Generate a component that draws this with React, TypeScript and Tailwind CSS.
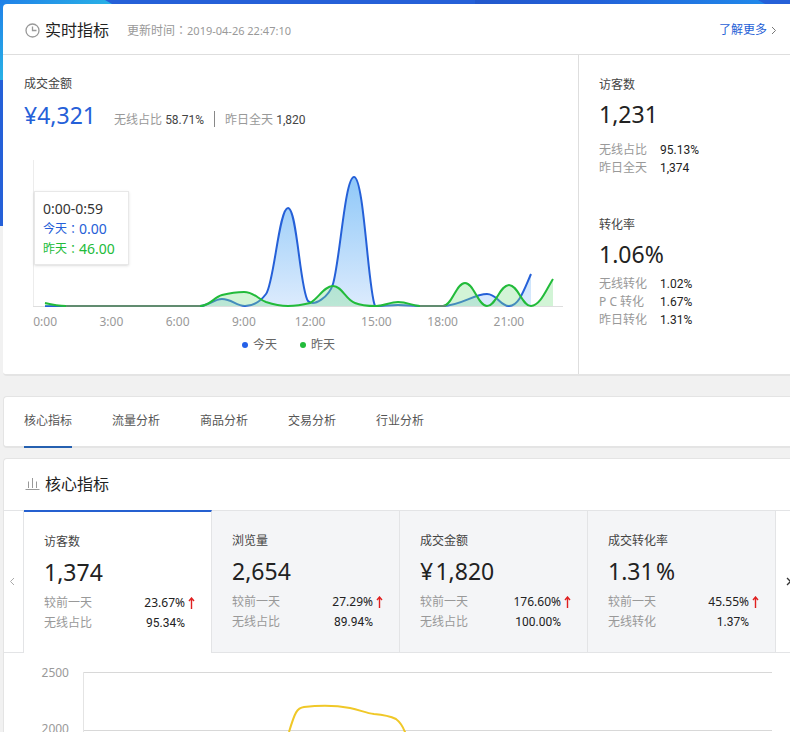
import React from "react";

const todayLine =
  "M45 306H200C208 306 214 299 222 299C232 299 236 306 245 306C254 306 260 302 266 294C274 284 279 208 288 208C297 208 300 290 308 301C314 307 329 297 333 284C340 260 345 177 354 177C364 177 368 290 375 306C382 306 390 305 398 305C408 305 412 306 420 306H443C460 306 474 294 487 294C497 294 500 306 509 306C519 306 524 290 531 274";
const yesterdayLine =
  "M45 303C53 305 58 306 66 306H200C210 306 214 297 222 295C230 293 237 292 244 292C254 292 258 299 266 302C275 305 280 306 288 306C296 306 302 305 310 303C318 299 324 286 333 286C342 286 346 300 355 303C362 306 368 306 376 306C384 306 390 302 398 302C408 302 412 306 420 306H443C452 306 456 283 465 283C474 283 478 306 487 306C496 306 500 285 509 285C518 285 522 306 531 306C540 306 546 290 553 279";

const hours = ["0:00", "3:00", "6:00", "9:00", "12:00", "15:00", "18:00", "21:00"];
const tabs = ["核心指标", "流量分析", "商品分析", "交易分析", "行业分析"];

type Row = [string, string];

/* Full-width colon, centred in its cell */
function Colon() {
  return <span className="font-['Noto_Sans_CJK_TC',sans-serif] text-xs">：</span>;
}

function SideMetric({ title, value, rows, roomy }: { title: string; value: string; rows: Row[]; roomy?: boolean }) {
  return (
    <section>
      <h3 className="text-xs leading-5 text-[#444]">{title}</h3>
      <p className="mt-[2px] text-[23px] leading-[34px] text-[#222]">{value}</p>
      <dl className={roomy ? "mt-[10px] text-xs leading-[18px]" : "mt-1 text-xs leading-[18px]"}>
        {rows.map(([k, v]) => (
          <div key={k} className="flex">
            <dt className="w-[61px] text-[#999]">{k}</dt>
            <dd className="font-[Roboto,sans-serif] text-[#222]">{v}</dd>
          </div>
        ))}
      </dl>
    </section>
  );
}

function UpArrow() {
  return (
    <svg className="h-3 w-[7px]" viewBox="0 0 7 12" fill="none" stroke="#e02020">
      <path d="M3.500 12V1.500M1 4L3.500 1L6 4" strokeWidth="1.400" />
    </svg>
  );
}

type CardData = { title: string; value: string; change: string; label: string; share: string };

const cards: CardData[] = [
  { title: "访客数", value: "1,374", change: "23.67%", label: "无线占比", share: "95.34%" },
  { title: "浏览量", value: "2,654", change: "27.29%", label: "无线占比", share: "89.94%" },
  { title: "成交金额", value: "¥\u200a1,820", change: "176.60%", label: "无线占比", share: "100.00%" },
  { title: "成交转化率", value: "1.31\u200a%", change: "45.55%", label: "无线转化", share: "1.37%" },
];

function MetricCard({ card, active }: { card: CardData; active: boolean }) {
  return (
    <button
      type="button"
      className={
        active
          ? "flex w-[188px] shrink-0 flex-col justify-start border-t-2 border-r border-t-[#2560d0] border-r-[#e3e4e6] bg-white pt-5 pr-[14px] pl-5 text-left"
          : "flex w-[188px] shrink-0 flex-col justify-start border-t border-r border-b border-[#e3e4e6] bg-[#f4f5f7] pt-5 pr-[14px] pl-5 text-left"
      }
    >
      <span className="block text-xs leading-5 text-[#444]">{card.title}</span>
      <span className="mt-[2px] block text-[23px] leading-9 text-[#222]">{card.value}</span>
      <span className="mt-[3px] flex w-full text-xs leading-5">
        <span className="flex-1 text-[#999]">较前一天</span>
        <span className="text-[#222]">{card.change}</span>
        <span className="flex w-3 items-center justify-center">
          <UpArrow />
        </span>
      </span>
      <span className="flex w-full pr-3 text-xs leading-5">
        <span className="flex-1 text-[#999]">{card.label}</span>
        <span className="font-[Roboto,sans-serif] text-[#222]">{card.share}</span>
      </span>
    </button>
  );
}

export default function App() {
  return (
    <div className="h-screen overflow-hidden bg-[#f1f1f1] font-['Noto_Sans','Noto_Sans_CJK_SC',sans-serif]">
      <div className="relative isolate pt-1 pl-[3px]">
        <div className="absolute inset-x-0 top-0 -z-10 h-[226px] overflow-hidden bg-[#2560d8]">
          <svg className="h-full w-full" viewBox="0 0 790 226" preserveAspectRatio="none">
            <defs>
              <linearGradient id="sky" x1="0" y1="0" x2="1" y2="1">
                <stop offset="0" stopColor="#2080e8" />
                <stop offset="0.5" stopColor="#28b0e6" />
              </linearGradient>
              <linearGradient id="band" x1="0" x2="1">
                <stop offset="0" stopColor="#2258cc" />
                <stop offset="0.4" stopColor="#2260d8" />
                <stop offset="1" stopColor="#2088ea" />
              </linearGradient>
            </defs>
            <path d="M0 0H105L112 4L3 80H0Z" fill="url(#sky)" />
            <path d="M475 0H758L765 4H475Z" fill="url(#band)" />
          </svg>
        </div>

        <section className="rounded-l border-b-2 border-[#e4e4e4] bg-white">
          <header className="flex h-[51px] items-center border-b border-[#dedede] pt-[2px] pr-[13px] pl-[22px]">
            <svg className="h-[15px] w-[15px]" viewBox="0 0 15 15" fill="none" stroke="#999" strokeWidth="1.300">
              <circle cx="7.500" cy="7.500" r="6.500" />
              <path d="M7.500 3.500V7.500H11.500" />
            </svg>
            <h2 className="ml-[5px] text-base text-[#222]">实时指标</h2>
            <p className="ml-[18px] text-xs text-[#999]">
              更新时间<Colon /><span className="text-[11px]">2019-04-26 22:47:10</span>
            </p>
            <a href="#more" className="ml-auto flex items-center gap-1 text-xs text-[#1f5fd6]">
              了解更多
              <svg className="h-[9px] w-[6px]" viewBox="0 0 6 9" fill="none" stroke="#777">
                <path d="M1 1L4.500 4.500L1 8" />
              </svg>
            </a>
          </header>

          <div className="flex">
            <div className="relative w-[576px] shrink-0 border-r border-[#dedede] pt-[19px]">
              <h3 className="pl-[21px] text-xs leading-5 text-[#444]">成交金额</h3>
              <div className="mt-1 flex h-[34px] items-center pl-[21px] text-xs">
                <strong className="w-[90px] text-[23px] leading-[34px] font-normal text-[#2560d8]">¥4,321</strong>
                <span className="pt-[10px] text-[#999]">
                  无线占比 <span className="font-[Roboto,sans-serif] text-[#444]">58.71%</span>
                </span>
                <span className="mt-2 ml-[10px] h-4 border-l border-[#888]" />
                <span className="ml-[10px] pt-[10px] text-[#999]">
                  昨日全天 <span className="font-[Roboto,sans-serif] text-[#444]">1,820</span>
                </span>
              </div>

              <svg className="mt-7 block h-[150px] w-full" viewBox="3 160 575 150" preserveAspectRatio="none">
                <defs>
                  <linearGradient id="blueFill" gradientUnits="userSpaceOnUse" x1="0" y1="177" x2="0" y2="306">
                    <stop offset="0" stopColor="#8fc8f8" />
                    <stop offset="1" stopColor="#dcebfd" />
                  </linearGradient>
                </defs>
                <path d="M33.500 160V306" stroke="#ececec" />
                <path d="M33 306.500H563" stroke="#dedede" />
                <path d={todayLine + "V306H45Z"} fill="url(#blueFill)" />
                <path d={todayLine} fill="none" stroke="#2560d8" strokeWidth="2" />
                <path d={yesterdayLine + "V306H45Z"} fill="#7fe08a" fillOpacity="0.35" />
                <path d={yesterdayLine} fill="none" stroke="#22bb3a" strokeWidth="2" />
                <path d="M66 306H200M420 306H446" stroke="#777e82" strokeWidth="1.500" />
              </svg>

              <div className="ml-[9px] grid w-[530px] grid-cols-8 pt-[2px] text-center text-xs leading-5 text-[#999]">
                {hours.map((h) => (
                  <span key={h}>{h}</span>
                ))}
              </div>
              <div className="flex items-center justify-center gap-[23px] pt-[3px] pr-1 pb-[19px] text-xs leading-5 text-[#666]">
                <span className="flex items-center gap-[5px]">
                  <i className="h-[6px] w-[6px] rounded-full bg-[#2560e8]" />
                  今天
                </span>
                <span className="flex items-center gap-[5px]">
                  <i className="h-[6px] w-[6px] rounded-full bg-[#22bb3a]" />
                  昨天
                </span>
              </div>

              <div className="absolute top-[136px] left-[31px] w-[95px] border border-[#e8e8e8] bg-white pt-[7px] pb-[5px] pl-2 text-sm leading-5 shadow-sm">
                <p className="text-[#333]">0:00-0:59</p>
                <p className="flex h-5 items-center text-[#2560d8]"><span className="text-xs">今天</span><Colon />0.00</p>
                <p className="flex h-5 items-center text-[#22bb3a]"><span className="text-xs">昨天</span><Colon />46.00</p>
              </div>
            </div>

            <div className="flex flex-col gap-[38px] pt-[20px] pl-5">
              <SideMetric roomy title="访客数" value="1,231" rows={[["无线占比", "95.13%"], ["昨日全天", "1,374"]]} />
              <SideMetric title="转化率" value="1.06%" rows={[["无线转化", "1.02%"], ["P C 转化", "1.67%"], ["昨日转化", "1.31%"]]} />
            </div>
          </div>
        </section>

        <nav className="mt-5 flex h-[52px] gap-10 rounded-l border border-r-0 border-b-2 border-[#e4e4e4] bg-white pl-5 text-xs text-[#555]">
          {tabs.map((t, i) => (
            <a key={t} href={"#" + t} className={i === 0 ? "-mb-[2px] border-b-2 border-[#2560b0] pt-4" : "pt-4"}>
              {t}
            </a>
          ))}
        </nav>

        <section className="mt-[10px] rounded-l border border-r-0 border-[#e4e4e4] bg-white">
          <header className="flex h-[51px] items-center gap-[5px] pb-[2px] pl-[21px]">
            <svg className="h-[15px] w-[15px]" viewBox="0 0 15 15" fill="none" stroke="#999">
              <path d="M.5 13.500H14.500M3.500 5.500V12M7.500 2V12M11.500 5.500V12" />
            </svg>
            <h2 className="text-base text-[#222]">核心指标</h2>
          </header>

          <div className="flex h-[143px] overflow-hidden">
            <button type="button" aria-label="上一页" className="flex w-5 shrink-0 items-center justify-center border border-l-0 border-[#e3e4e6] pr-1">
              <svg className="h-[9px] w-[6px]" viewBox="0 0 6 9" fill="none" stroke="#aaa">
                <path d="M5 1L1.500 4.500L5 8" />
              </svg>
            </button>
            {cards.map((c, i) => (
              <MetricCard key={c.title} card={c} active={i === 0} />
            ))}
            <button type="button" aria-label="下一页" className="flex flex-1 items-center justify-start border-t border-b border-[#e3e4e6] pl-[10px]">
              <svg className="h-[9px] w-[6px] shrink-0" viewBox="0 0 6 9" fill="none" stroke="#333" strokeWidth="1.300">
                <path d="M1 1L4.500 4.500L1 8" />
              </svg>
            </button>
          </div>

          <div className="flex pt-[10px] pr-[18px]">
            <div className="w-[79px] shrink-0 pr-[14px] text-right text-xs text-[#999]">
              <p className="h-[56px] leading-5">2500</p>
              <p className="h-[56px] leading-5">2000</p>
            </div>
            <svg className="mt-[9px] h-[100px] w-full" viewBox="83 672 689 100" preserveAspectRatio="none">
              <path d="M83 672.500H772M83 730.500H772" stroke="#d8d8d8" />
              <path d="M83.500 672V772" stroke="#e4e4e4" />
              <path d="M289 732C295 712 297 708 304 707C320 705 335 705 350 708C360 710 366 713 374 714C386 715 390 716 396 719C400 722 403 727 405 732L430 772" fill="none" stroke="#f0c828" strokeWidth="2" />
            </svg>
          </div>
        </section>
      </div>
    </div>
  );
}
